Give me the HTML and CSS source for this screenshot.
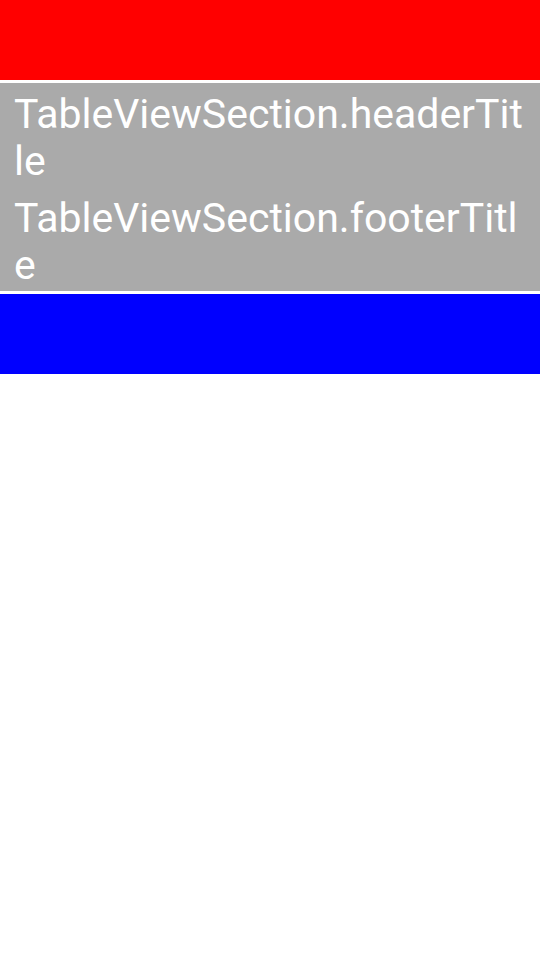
FILE: index.html
```html
<!DOCTYPE html>
<html>
<head>
<meta charset="utf-8">
<link rel="stylesheet" href="styles.css">
</head>
<body>
<div class="header"></div>
<div class="section">
  <div class="title">TableViewSection.headerTitle</div>
  <div class="title">TableViewSection.footerTitle</div>
</div>
<div class="footer"></div>
</body>
</html>
```
FILE: styles.css
```css
html, body {
  margin: 0;
  padding: 0;
  background: #ffffff;
}
body {
  width: 540px;
  font-family: Roboto, "Liberation Sans", sans-serif;
}
.header {
  height: 80px;
  background: #ff0000;
  margin-bottom: 3px;
}
.section {
  background: #aaaaaa;
  height: 208px;
  padding: 8px 14px 0 14px;
  box-sizing: border-box;
  margin-bottom: 3px;
  display: flex;
  flex-direction: column;
  gap: 10px;
}
.title {
  color: #ffffff;
  font-size: 41px;
  line-height: 47px;
  word-break: break-all;
}
.footer {
  height: 80px;
  background: #0000ff;
}
```
